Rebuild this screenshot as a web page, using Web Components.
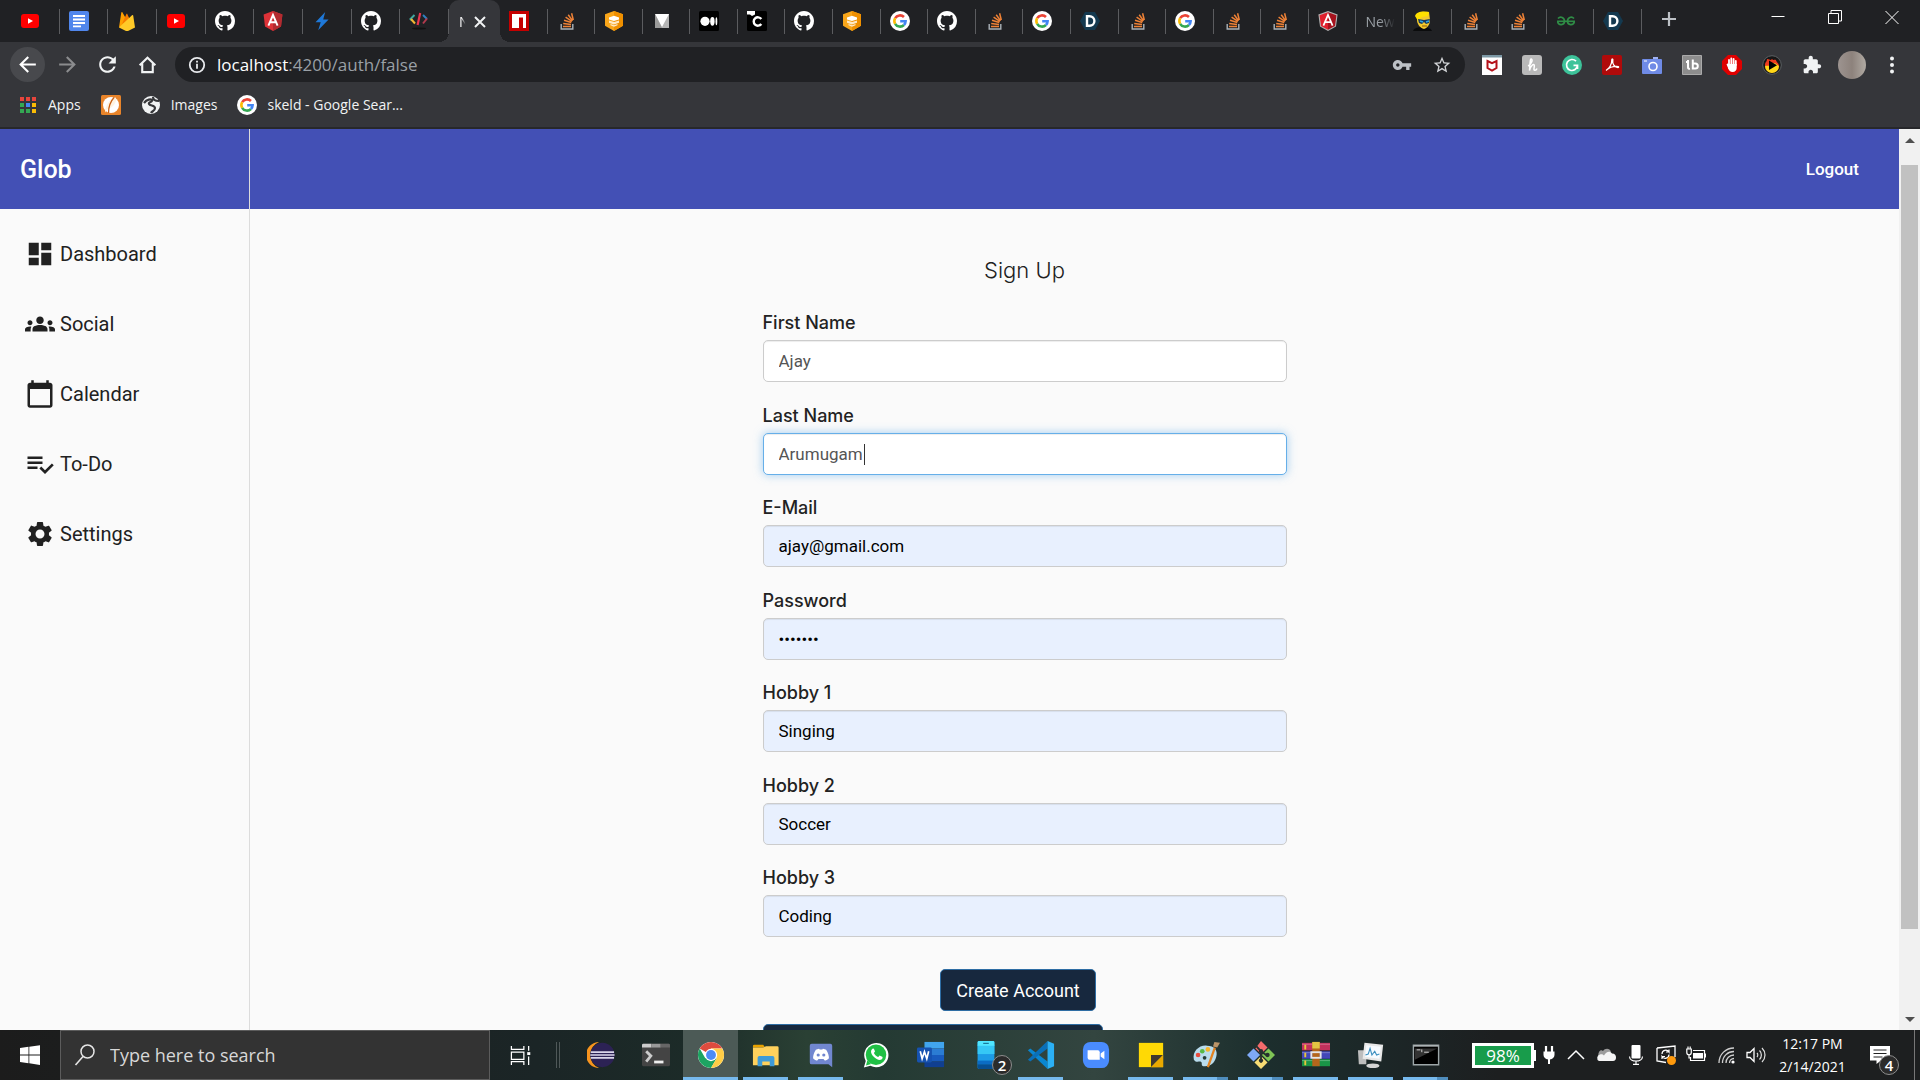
<!DOCTYPE html>
<html lang="en">
<head>
<meta charset="utf-8">
<title>NgGlob</title>
<style>
    body{
        --ui-font: "Open Sans", "Noto Sans", sans-serif;
        --app-font: Roboto, "Liberation Sans", sans-serif;
        --label-font: Inter, "Open Sans", sans-serif;
        --main-color: #4350b5;
        --navy: #17283e;
        display: flex;
        flex-direction: column;
        height: 100vh;
        margin: 0;
        overflow: hidden;
        font-family: var(--ui-font);
    }
    glob-app{
        flex: 1;
        min-height: 0;
    }
</style>
</head>
<body>
    <browser-tabs></browser-tabs>
    <browser-toolbar></browser-toolbar>
    <browser-bookmarks></browser-bookmarks>
    <glob-app>
        <glob-field label="First Name" value="Ajay"></glob-field>
        <glob-field label="Last Name" value="Arumugam" active></glob-field>
        <glob-field label="E-Mail" type="email" value="ajay@gmail.com" filled></glob-field>
        <glob-field label="Password" type="password" value="glob123" filled></glob-field>
        <glob-field label="Hobby 1" value="Singing" filled></glob-field>
        <glob-field label="Hobby 2" value="Soccer" filled></glob-field>
        <glob-field label="Hobby 3" value="Coding" filled></glob-field>
    </glob-app>
    <task-bar></task-bar>

<script>
const reset = `
    :host,
    *{
        box-sizing: border-box;
    }
    *{
        margin: 0;
        padding: 0;
    }
    button{
        border: 0;
        background: none;
        color: inherit;
        font: inherit;
    }
    a{
        color: inherit;
        text-decoration: none;
    }
`

// [viewBox size, markup]
const icons = {
    youtube: [20, '<rect x="1" y="3" width="18" height="14" rx="3" fill="#f00"/><path d="M8 7.2v5.6l5-2.8z" fill="#fff"/>'],
    docs: [20, '<rect width="20" height="20" rx="2" fill="#5086ec"/><path d="M4 5h12M4 8.5h12M4 12h12M4 15.3h8" stroke="#fff" stroke-width="1.8"/>'],
    firebase: [20, '<path d="M2 16.5 4.3 1.6c.1-.7.9-.8 1.2-.2L12 13z" fill="#ffa000"/><path d="M5 13 9.3 3.2c.2-.5.9-.5 1.1 0L13 9z" fill="#f57c00"/><path d="M2 16.5 15 4.2c.4-.4 1.1-.2 1.2.4L18 16.5 11 20a2 2 0 0 1-2 0z" fill="#ffca28"/>'],
    github: [16, '<path fill="#fff" d="M8 0C3.58 0 0 3.58 0 8c0 3.54 2.29 6.53 5.47 7.59.4.07.55-.17.55-.38 0-.19-.01-.82-.01-1.49-2.01.37-2.53-.49-2.69-.94-.09-.23-.48-.94-.82-1.13-.28-.15-.68-.52-.01-.53.63-.01 1.08.58 1.23.82.72 1.21 1.87.87 2.33.66.07-.52.28-.87.51-1.07-1.78-.2-3.64-.89-3.64-3.95 0-.87.31-1.59.82-2.15-.08-.2-.36-1.02.08-2.12 0 0 .67-.21 2.2.82.64-.18 1.32-.27 2-.27s1.36.09 2 .27c1.53-1.04 2.2-.82 2.2-.82.44 1.1.16 1.92.08 2.12.51.56.82 1.27.82 2.15 0 3.07-1.87 3.75-3.65 3.95.29.25.54.73.54 1.48 0 1.07-.01 1.93-.01 2.2 0 .21.15.46.55.38A8.01 8.01 0 0 0 16 8c0-4.42-3.58-8-8-8z"/>'],
    angular: [20, '<path d="M10 0 .6 3.4 2 15.6 10 20l8-4.4 1.4-12.2z" fill="#dd3238"/><path d="M10 0v20l8-4.4 1.4-12.2z" fill="#b32b30"/><path d="M5.4 14.6 10 4l4.6 10.6M7.2 11.2h5.6" fill="none" stroke="#fff" stroke-width="1.9"/>'],
    angularOld: [20, '<path d="M10 0 .4 3.4 2 15.6 10 20l8-4.4 1.6-12.2z" fill="#b3b3b3"/><path d="M10 1.2 1.6 4.2 3 15l7 3.8z" fill="#e0202d"/><path d="M10 1.2v17.6l7-3.8 1.4-10.8z" fill="#a6121d"/><path d="M5.4 14.6 10 4l4.6 10.6M7.2 11.2h5.6" fill="none" stroke="#fff" stroke-width="1.7"/>'],
    bolt: [20, '<path d="M13.2 1 3.5 11.3h5.2L6.2 19.2 16.6 8.6h-5.4z" fill="#1e78d8"/>'],
    code: [20, '<path d="M5.5 4 1.5 8l1.5 1.5" fill="none" stroke="#3fa9a0" stroke-width="2"/><path d="m2 8 4 4.5" stroke="#f2b632" stroke-width="2"/><path d="m11.2 2-2.6 12" stroke="#e8364f" stroke-width="2.2"/><path d="m14 4 4 4" stroke="#2f7fc1" stroke-width="2"/><path d="m18 7.5-4 5" stroke="#b33a4e" stroke-width="2"/><ellipse cx="10" cy="17.5" rx="7" ry="1" fill="#111"/>'],
    npm: [20, '<path d="M0 0h20v20H0z" fill="#c40000"/><path d="M3 3h14v14h-3V6.5h-4V17H3z" fill="#fff"/>'],
    stack: [20, '<path d="M4.2 13v5h11.6v-5" fill="none" stroke="#aab2b8" stroke-width="1.4"/><g stroke="#ef8236" stroke-width="1.5"><path d="M6 15.4h8M6.2 12.5l7.8.9M7 9.3l7.3 2.2M8.6 6.2l6.3 4.1M11.2 3.8l4.4 5.9M14.6 2.2l1.7 6.8"/></g>'],
    aws: [20, '<path d="m10 0 9 3.3v11.4L10 20l-9-5.3V3.3z" fill="#f9a61a"/><path d="m10 0 9 3.3v11.4L10 20z" fill="#f09000"/><path d="m5 6.5 5-1.8 5 1.8v2l-5 1.6-5-1.6z" fill="#fff"/><path d="m5 9.5 5 1.6 5-1.6v2.2l-5 1.7-5-1.7zM6.5 13l3.5 1.2 3.5-1.2v1.3L10 15.8l-3.5-1.5z" fill="#ffe9c4"/>'],
    vee: [20, '<path d="M3 3h14v14H3z" fill="#b5b5b5"/><path d="M3 3h14l-7 13z" fill="#fff"/><path d="M3 3v14h7z" fill="#9a9a9a"/>'],
    medium: [20, '<rect width="20" height="20" rx="1.5" fill="#000"/><g fill="#fff"><circle cx="6" cy="10.3" r="4.6"/><ellipse cx="13.4" cy="10.3" rx="2.2" ry="4.4"/><ellipse cx="17.4" cy="10.3" rx=".9" ry="4"/></g>'],
    codecademy: [20, '<rect width="20" height="20" rx="1.5" fill="#000"/><path d="M0 0h8v3.4L5 5 3 3.6H0z" fill="#fff"/><path d="M14.3 8a4.2 4.2 0 1 0 0 5" fill="none" stroke="#fff" stroke-width="2.4"/>'],
    google: [20, '<circle cx="10" cy="10" r="10" fill="#fff"/><g fill="none" stroke-width="2.6"><path d="M13.96 6.04A5.6 5.6 0 0 0 5.15 7.2" stroke="#ea4335"/><path d="M5.15 7.2a5.6 5.6 0 0 0 0 5.6" stroke="#fbbc05"/><path d="M5.15 12.8a5.6 5.6 0 0 0 8.81 1.16" stroke="#34a853"/><path d="M13.96 13.96A5.6 5.6 0 0 0 15.6 10.2H10.2" stroke="#4285f4"/></g>'],
    hexD: [20, '<path d="M5 1h10l5 9-5 9H5l-5-9z" fill="#14394f"/><path d="M7 5.2h2.6a4.8 4.8 0 0 1 0 9.6H7z" fill="none" stroke="#fff" stroke-width="2.4"/>'],
    face: [20, '<path d="M0 20c1-3 5-4 9-4s9 1 10 4z" fill="#0b0c0d"/><path d="M4 6c0-4 4-6 12-5l1 8c0 5-3 8-6 9-4-1-7-5-7-9z" fill="#f3c92c"/><path d="M2 5c2-5 8-5 14-4l-1 4-6 1-4 4z" fill="#ffe000"/><path d="m5 8 6 1 6-1-1 4-3 1-2-2-2 2-3-1z" fill="#173a5e"/><path d="m7 10 3 1m3 0 3-1" stroke="#2fa4e8" stroke-width="1.5"/><path d="M9 15h5" stroke="#8a5b13"/>'],
    gfg: [20, '<path d="M1 10.3h18" stroke="#2f8d46" stroke-width="1.6"/><path d="M2 7.5c2.5-2.7 6.5-1 6.5 2.8 0 4-6 4.5-6.8.5M18 7.5c-2.5-2.7-6.5-1-6.5 2.8 0 4 6 4.5 6.8.5" fill="none" stroke="#2f8d46" stroke-width="1.7"/>'],
    plus: [20, '<path d="M10 3v14M3 10h14" stroke="#bdc1c6" stroke-width="2.2"/>'],
    close: [20, '<path d="m5 6 10 10M15 6 5 16" stroke="#f1f3f4" stroke-width="2"/>'],
    minimize: [20, '<path d="M3.5 9.5h13" stroke="#fff"/>'],
    restore: [20, '<path d="M3.5 6.5h10v10h-10zM6 6V3.5h10.5V14H14" fill="none" stroke="#fff"/>'],
    exit: [20, '<path d="m3.5 4 13 13m0-13-13 13" stroke="#fff"/>'],
    back: [24, '<path fill="#fff" d="M20 11H7.83l5.59-5.59L12 4l-8 8 8 8 1.41-1.41L7.83 13H20v-2z"/>'],
    forward: [24, '<path fill="#8b8c8e" d="M12 4l-1.41 1.41L16.17 11H4v2h12.17l-5.58 5.59L12 20l8-8z"/>'],
    reload: [24, '<path fill="#f1f3f4" d="M17.65 6.35C16.2 4.9 14.21 4 12 4c-4.42 0-7.99 3.58-7.99 8s3.57 8 7.99 8c3.73 0 6.84-2.55 7.73-6h-2.08c-.82 2.33-3.04 4-5.65 4-3.31 0-6-2.69-6-6s2.69-6 6-6c1.66 0 3.14.69 4.22 1.78L13 11h7V4l-2.35 2.35z"/>'],
    home: [24, '<path d="M6.5 11v9h11v-9M3.8 12.8 12 5l8.2 7.8" fill="none" stroke="#f1f3f4" stroke-width="2.2"/>'],
    info: [20, '<circle cx="10" cy="10" r="7.2" fill="none" stroke="#e8eaed" stroke-width="1.8"/><path d="M10 8.8v5M10 5.8v1.8" stroke="#e8eaed" stroke-width="1.8"/>'],
    key: [24, '<path fill="#bdc1c6" d="M12.65 10C11.83 7.67 9.61 6 7 6c-3.31 0-6 2.69-6 6s2.69 6 6 6c2.61 0 4.83-1.67 5.65-4H17v4h4v-4h2v-4H12.65zM7 14c-1.1 0-2-.9-2-2s.9-2 2-2 2 .9 2 2-.9 2-2 2z"/>'],
    star: [24, '<path fill="#d0d2d5" d="M22 9.24l-7.19-.62L12 2 9.19 8.63 2 9.24l5.46 4.73L5.82 21 12 17.27 18.18 21l-1.63-7.03L22 9.24zM12 15.4l-3.76 2.27 1-4.28-3.32-2.88 4.38-.38L12 6.1l1.71 4.04 4.38.38-3.32 2.88 1 4.28L12 15.4z"/>'],
    mcafee: [20, '<path d="M0 0h20v20H0z" fill="#fff"/><path d="M0 0h20v2.5H0z" fill="#7c98a5"/><path d="m5.5 6 4.5 2.2L14.5 6v7L10 15.5 5.5 13z" fill="none" stroke="#b5121b" stroke-width="2"/>'],
    honey: [20, '<rect width="20" height="20" rx="3" fill="#b9b9b9"/><path d="M6 11c3-1 5-6 3.5-7S8 9 7.5 15.5C9 10 12 8 12.3 10.5c.2 2-1.3 5 .7 4.8 1 0 1.7-1 2-1.8" fill="none" stroke="#fff" stroke-width="1.5"/>'],
    grammarly: [20, '<circle cx="10" cy="10" r="10" fill="#3dc39a"/><path d="M14 6.2a5.5 5.5 0 1 0 1.5 4.2h-4M15.5 14v-3.5" fill="none" stroke="#fff" stroke-width="1.7"/>'],
    acrobat: [20, '<rect width="20" height="20" rx="2" fill="#b00a0a"/><path d="M4 15.5c3-1.5 6-6 5.8-10.5 0-1.5 1.4-1.2 1 .3C10 9 13 12.5 16 12.5c1 0 .8-1-.5-1C11.5 11.3 7 12.8 4.5 15" fill="none" stroke="#fff" stroke-width="1.3"/>'],
    camera: [20, '<path d="M11 2h5v2h-5z" fill="#9fb1f3"/><rect y="4" width="20" height="15" rx="1" fill="#6f8be6"/><path d="M2 6h3" stroke="#fff"/><circle cx="11" cy="11.5" r="4" fill="none" stroke="#fff" stroke-width="1.6"/>'],
    tb: [20, '<path d="M.5.5h19v19H.5z" fill="#8d8d8d" stroke="#aaa"/><path d="M4 7h3m-1-2v7.5c0 1 1 1.5 2 1.3M10.8 4.5v9h2.5a2.3 2.3 0 0 0 0-5h-2" fill="none" stroke="#fff" stroke-width="2"/>'],
    hand: [20, '<path d="M6 0h8l6 6v8l-6 6H6l-6-6V6z" fill="#e00000"/><g stroke="#fff" stroke-width="1.8" stroke-linecap="round"><path d="M7 10V5M9.3 9V3.5M11.6 9V4M13.8 10V6M5.5 9.5 7 13"/></g><path d="M6 9h8.7v4c0 2-1.5 4-4.2 4-2.2 0-3.5-1.5-4.5-4z" fill="#fff"/>'],
    flame: [20, '<circle cx="10" cy="10" r="9.3" fill="#171717" stroke="#5b6063"/><path d="M3 10c0-3 2-3 2-6 3 0 3 2 5 0 2 2 2 0 4 1 0 2 3 3 3 6a7 7 0 0 1-14-1z" fill="#ee3b1f"/><path d="M3 11c2-1 4 1 7-2s5 1 7 2a7 7 0 0 1-14 0z" fill="#ffd818"/><path d="m7 5.5 8 4.8-8 4.7z" fill="#000"/>'],
    puzzle: [24, '<path fill="#f1f3f4" d="M20.5 11H19V7c0-1.1-.9-2-2-2h-4V3.5C13 2.12 11.88 1 10.5 1S8 2.12 8 3.5V5H4c-1.1 0-1.99.9-1.99 2v3.8H3.5c1.49 0 2.7 1.21 2.7 2.7s-1.21 2.7-2.7 2.7H2V20c0 1.1.9 2 2 2h3.8v-1.5c0-1.49 1.21-2.7 2.7-2.7 1.49 0 2.7 1.21 2.7 2.7V22H17c1.1 0 2-.9 2-2v-4h1.5c1.38 0 2.5-1.12 2.5-2.5S21.88 11 20.5 11z"/>'],
    avatar: [28, '<defs><linearGradient id="a"><stop stop-color="#9d9490"/><stop offset=".5" stop-color="#8d827c"/><stop offset="1" stop-color="#b0aaa3"/></linearGradient></defs><circle cx="14" cy="14" r="14" fill="url(#a)"/>'],
    dots: [20, '<g fill="#f1f3f4"><circle cx="10" cy="3.5" r="2"/><circle cx="10" cy="10" r="2"/><circle cx="10" cy="16.5" r="2"/></g>'],
    apps: [20, '<g fill="#e8453c"><path d="M2 2h4v4H2zM8 2h4v4H8zM14 2h4v4h-4z"/></g><path d="M2 8h4v4H2zM2 14h4v4H2zM8 14h4v4H8z" fill="#34a853"/><path d="M8 8h4v4H8z" fill="#4285f4"/><path d="M14 8h4v4h-4zM14 14h4v4h-4z" fill="#fbbc05"/>'],
    feather: [20, '<rect width="20" height="20" rx="1.5" fill="#e8842a"/><circle cx="10" cy="10" r="8" fill="#fff"/><path d="M4 15C6 8 10 3 15 2.5c1 5-3 10-9 12l-2 3z" fill="#fff3e0"/><path d="M13 2.5C9 7 7.5 12 7.5 18" fill="none" stroke="#c95f14" stroke-width="1.3"/>'],
    globe: [20, '<circle cx="10" cy="10" r="9" fill="#f1f3f4"/><path d="M3 8c3-4 7-4 8-3 1 2-4 2-3 4s6 1 6 4-3 3-4 5M12 2c0 3 3 4 6 4" fill="none" stroke="#36373a" stroke-width="2.2"/>'],
    dashboard: [24, '<path d="M3 13h8V3H3v10zm0 8h8v-6H3v6zm10 0h8V11h-8v10zm0-18v6h8V3h-8z"/>'],
    groups: [24, '<path d="M12 12.75c1.63 0 3.07.39 4.24.9 1.08.48 1.76 1.56 1.76 2.73V18H6v-1.61c0-1.18.68-2.26 1.76-2.73 1.17-.52 2.61-.91 4.24-.91zM4 13c1.1 0 2-.9 2-2s-.9-2-2-2-2 .9-2 2 .9 2 2 2zm1.13 1.1c-.37-.06-.74-.1-1.13-.1-.99 0-1.93.21-2.78.58C.48 14.9 0 15.62 0 16.43V18h4.5v-1.61c0-.83.23-1.61.63-2.29zM20 13c1.1 0 2-.9 2-2s-.9-2-2-2-2 .9-2 2 .9 2 2 2zm4 3.43c0-.81-.48-1.53-1.22-1.85-.85-.37-1.79-.58-2.78-.58-.39 0-.76.04-1.13.1.4.68.63 1.46.63 2.29V18H24v-1.57zM12 6c1.66 0 3 1.34 3 3s-1.34 3-3 3-3-1.34-3-3 1.34-3 3-3z"/>'],
    calendar: [24, '<path d="M20 3h-1V1h-2v2H7V1H5v2H4c-1.1 0-2 .9-2 2v16c0 1.1.9 2 2 2h16c1.1 0 2-.9 2-2V5c0-1.1-.9-2-2-2zm0 18H4V8h16v13z"/>'],
    todo: [24, '<path d="M14 10H2v2h12v-2zm0-4H2v2h12V6zM2 16h8v-2H2v2zm19.5-4.5L23 13l-6.99 7-4.51-4.5L13 14l3.01 3 5.49-5.5z"/>'],
    settings: [24, '<path d="M19.14 12.94c.04-.3.06-.61.06-.94 0-.32-.02-.64-.07-.94l2.03-1.58c.18-.14.23-.41.12-.61l-1.92-3.32c-.12-.22-.37-.29-.59-.22l-2.39.96c-.5-.38-1.03-.7-1.62-.94l-.36-2.54c-.04-.24-.24-.41-.48-.41h-3.84c-.24 0-.43.17-.47.41l-.36 2.54c-.59.24-1.13.57-1.62.94l-2.39-.96c-.22-.08-.47 0-.59.22L2.74 8.87c-.12.21-.08.47.12.61l2.03 1.58c-.05.3-.09.63-.09.94s.02.64.07.94l-2.03 1.58c-.18.14-.23.41-.12.61l1.92 3.32c.12.22.37.29.59.22l2.39-.96c.5.38 1.03.7 1.62.94l.36 2.54c.05.24.24.41.48.41h3.84c.24 0 .44-.17.47-.41l.36-2.54c.59-.24 1.13-.56 1.62-.94l2.39.96c.22.08.47 0 .59-.22l1.92-3.32c.12-.22.07-.47-.12-.61l-2.01-1.58zM12 15.6c-1.98 0-3.6-1.62-3.6-3.6s1.62-3.6 3.6-3.6 3.6 1.62 3.6 3.6-1.62 3.6-3.6 3.6z"/>'],
    windows: [20, '<path d="M0 3 8.5 1.8v7.7H0zM9.3 1.7 20 .2v9.3H9.3zM0 10.4h8.5v7.8L0 17zM9.3 10.4H20v9.5L9.3 18.3z" fill="#fff"/>'],
    search: [24, '<circle cx="14.5" cy="8.5" r="6.5" fill="none" stroke="#e6e6e6" stroke-width="1.5"/><path d="M10 13.5 2.5 22" stroke="#e6e6e6" stroke-width="1.6"/>'],
    taskview: [24, '<path d="M2.5 2v3.5h13V2M2.5 22v-3.5h13V22M2.5 8.5h13V16h-13zM20.5 2v5M20.5 13v9" fill="none" stroke="#fff" stroke-width="1.3"/><path d="M19 8.5h3.2v3H19z" fill="#fff"/>'],
    eclipse: [30, '<path d="M13 1a14 14 0 0 0 0 28 15 15 0 0 1 0-28z" fill="#f7941e"/><circle cx="16.5" cy="15" r="13" fill="#2c2255"/><path d="M4 12h25M3.5 15h26M4 18h25" stroke="#d9d5ea" stroke-width="1.8"/>'],
    terminal: [30, '<rect y="3" width="30" height="24" rx="1.5" fill="#444"/><path d="M0 4.5A1.5 1.5 0 0 1 1.5 3H10v4H0z" fill="#ccc"/><path d="M10 3h10v4H10z" fill="#999"/><path d="M20 3h8.5A1.5 1.5 0 0 1 30 4.5V7H20z" fill="#666"/><path d="m4.500 11 5 5-5 6" fill="none" stroke="#ccc" stroke-width="3"/><path d="M13 22.5h10" stroke="#eee" stroke-width="3"/>'],
    chrome: [30, '<circle cx="15" cy="15" r="14" fill="#fff"/><path d="M15 15 2.9 8A14 14 0 0 1 27.1 8H15z" fill="#dd4b3e"/><path d="M2.9 8A14 14 0 0 0 15 29l6.1-10.5-12.2 0z" fill="#1da462"/><path d="M27.1 8A14 14 0 0 1 15 29l6.1-10.500L15 8z" fill="#ffcd46"/><circle cx="15" cy="15" r="6.6" fill="#fff"/><circle cx="15" cy="15" r="5.3" fill="#4c8bf5"/>'],
    folder: [30, '<path d="M1 5.5A1.500 1.500 0 0 1 2.500 4H12l2 3H1z" fill="#e8a200"/><path d="M1 7h11l3-1.500h12A1.500 1.500 0 0 1 28.500 7v19H1z" fill="#ffd15c"/><path d="M6 27v-9a2 2 0 0 1 2-2h14a2 2 0 0 1 2 2v9h-5v-5h-8v5z" fill="#3f9bd8"/>'],
    discord: [30, '<path d="M5 3h20a2 2 0 0 1 2 2v23l-4-3H5a2 2 0 0 1-2-2V5a2 2 0 0 1 2-2z" fill="#7187d0"/><path d="M9.5 9.5c2-1.3 3.5-1.3 3.500-1.300l.6 1h2.800l.6-1s1.500 0 3.500 1.300c2.200 3.500 3 6.500 3 9-2 2.300-4.500 2.500-4.500 2.500l-1.300-1.800h-5.400L11 21s-2.500-.2-4.500-2.500c0-2.500.8-5.500 3-9z" fill="#fff"/><circle cx="12" cy="15" r="1.7" fill="#7187d0"/><circle cx="18" cy="15" r="1.7" fill="#7187d0"/>'],
    whatsapp: [30, '<path d="M2 28.500 4 21.500A13 13 0 1 1 9 26.500z" fill="#fff"/><circle cx="15" cy="14.800" r="11" fill="#20c045"/><path d="m4.300 26.200 1.500-5.500 4 4z" fill="#20c045"/><path d="M10.500 9c1-1.500 2.300-1 2.600 0l.8 2c.2.8-1.400 1.500-1 2.200 1 1.800 2.300 3 4.200 3.900.8.300 1.300-1.800 2.200-1.400l2.400 1.200c.8.500.3 2.400-1 3-4 2-11.700-5-11-9 .1-.7.3-1.300.8-1.900z" fill="#fff"/>'],
    word: [30, '<path d="M8 1h21v7H8z" fill="#41a5ee"/><path d="M8 8h21v7H8z" fill="#2b7cd3"/><path d="M8 15h21v7H8z" fill="#185abd"/><path d="M8 22h21v6H8z" fill="#103f91"/><rect y="7" width="16" height="16" rx="1.5" fill="#1652b0"/><path d="m3.500 11 2 8L8 11.500l2.500 7.500 2-8" fill="none" stroke="#fff" stroke-width="1.800"/>'],
    phone: [30, '<rect x="6" width="18" height="30" rx="1.5" fill="#1c9be6"/><path d="M6 4h18v10H6z" fill="#35c7f5"/><path d="M6 21h18v4H6z" fill="#0b6cc4"/><path d="M6 25h18v3.500A1.500 1.500 0 0 1 22.500 30h-15A1.500 1.500 0 0 1 6 28.500z" fill="#074f92"/><path d="M6 1.500A1.500 1.500 0 0 1 7.500 0h15A1.500 1.500 0 0 1 24 1.500V5H6z" fill="#50e6ff"/><path d="M12 2.500h6" stroke="#0a5a80"/>'],
    vscode: [30, '<path d="m1 10 2.500-2L22 22v8z" fill="#0a86d1"/><path d="M1 20 22 0v8L3.500 22z" fill="#0a6fb8"/><path d="m22 0 7 3v24l-7 3z" fill="#2bb0f5"/>'],
    zoom: [30, '<rect x="1" y="1" width="28" height="28" rx="8" fill="#4a8cff"/><path d="M6 10h11a2 2 0 0 1 2 2v8H8a2 2 0 0 1-2-2z" fill="#fff"/><path d="m20 13.500 4-3v9l-4-3z" fill="#fff"/>'],
    sticky: [30, '<path d="M2 2h26v26H2z" fill="#ffd905"/><path d="M15 15h13L15 28z" fill="#3f3a2e"/><path d="M28 15v13H15z" fill="#eaa900"/>'],
    paint: [30, '<path d="M2 20C0 11 8 4 16 5c8 0 12 5 10 12-2 8-8 11-14 10-3-1 0-4-3-5-3 0-5 1-7-2z" fill="#b9dced"/><circle cx="6.5" cy="15" r="2.5" fill="#e84b3c"/><circle cx="11" cy="11" r="2.5" fill="#58b947"/><circle cx="17" cy="9" r="2.5" fill="#f7b52c"/><circle cx="13.5" cy="18" r="2" fill="#253b38"/><path d="M24.500 7 17 28" stroke="#e38220" stroke-width="2.400"/><path d="m22.500 6 1.500-5 6 1-3 5z" fill="#bb9468"/>'],
    git: [30, '<path d="m15 0 7 7-7 7-6-6z" fill="#f36b6b"/><path d="m23 8 7 7-7 7-7-7z" fill="#7fc455"/><path d="m7 8 7 7-7 7-7-7z" fill="#7fa9f7"/><path d="m15 16 7 7-7 7-7-7z" fill="#f7dc74"/><path d="M9 4.500 15 11v12M15 11l7 5" fill="none" stroke="#26302f" stroke-width="2"/><g fill="#26302f"><circle cx="15" cy="11" r="2.3"/><circle cx="15" cy="21" r="2.3"/><circle cx="22" cy="15" r="2.3"/></g>'],
    winrar: [30, '<path d="M0 2h30v8H0z" fill="#c2305c"/><path d="M0 11h30v8H0z" fill="#4247b8"/><path d="M0 19.500h30V27H0z" fill="#199447"/><path d="M0 3.500h30M0 12.500h30M0 21h30" stroke="#fff" stroke-opacity=".3"/><path d="M11 1h8v26h-8z" fill="#b4661c"/><path d="M11 1h8v7h-8z" fill="#e3c343"/><rect x="10" y="12" width="10" height="6" fill="none" stroke="#e6e6e6" stroke-width="2"/><path d="M3.500 4v5M3.500 12.500v5M3.500 21v5" stroke="#e8c53b" stroke-width="2"/>'],
    monitor: [30, '<path d="M1 10h9v15H2z" fill="#bdbdbd"/><ellipse cx="17" cy="26.500" rx="7" ry="2.500" fill="#d5d5d5"/><path d="m8 2 20 2-2 18L6 19z" fill="#e8e8e8"/><path d="m10 4.500 15.500 1.700L24 19 8.500 17z" fill="#f7fbff"/><path d="m9 15 3-1 2-6 2 7 3-4 2 4 3-1" fill="none" stroke="#3b8fc0" stroke-width="1.200"/>'],
    cmd: [30, '<path d="M1.500 4.500h27v21h-27z" fill="#000" stroke="#9da6a8" stroke-width="1.500"/><path d="M2 5.500h26" stroke="#c6cccd"/><path d="M3 8h24L3 20z" fill="#333"/><path d="M5 9.500h4M10.500 9v3M13 12h5" stroke="#ddd"/>'],
    plug: [20, '<path d="M7 1v6M13 1v6" stroke="#fff" stroke-width="2.200"/><path d="M4.500 6.500h11V10a5.500 4.500 0 0 1-11 0z" fill="#fff"/><path d="M10 13v6" stroke="#fff" stroke-width="2"/>'],
    up: [20, '<path d="m2 14 8-8 8 8" fill="none" stroke="#fff" stroke-width="1.500"/>'],
    cloud: [20, '<path d="M4 13a5 5 0 0 1-1-6c1-2 3-2 4-1 2-3 7-3 8 1l-6 6z" fill="#9c9c9c"/><path d="M3 16a3.500 3.500 0 0 1 1-6.500c2-.5 3 .3 4 1 2-4 6-5 8-2 3 0 4 2 4 4s-1 3.500-3 3.500z" fill="#f5f5f5"/>'],
    mic: [20, '<rect x="5.500" width="9" height="13.500" rx="1" fill="#fff"/><path d="M3.500 11.500c0 6 13 6 13 0M10 16v3.300M7 19.300h6" fill="none" stroke="#fff" stroke-width="1.200"/>'],
    update: [20, '<path d="M1 3 19 1v11M1 3v13l9 1.500" fill="none" stroke="#fff" stroke-width="1.300"/><path d="M6 9c0-4 5-5 7-2V4.500M13 7h-3M13 9.500c0 4-5 5-7 2V14M6 11.500h3" fill="none" stroke="#fff" stroke-width="1.200"/><circle cx="15.500" cy="15.500" r="4.500" fill="#ff9a0d"/>'],
    power: [20, '<path d="M7 5.500h11.500v10h-14V12" fill="none" stroke="#fff" stroke-width="1.200"/><path d="M7 8h10v5.500H7zM19 8.500h1v4h-1z" fill="#fff"/><path d="M.8 4v3.500c0 3 4.500 3 4.500 0V4zM2 1.500V4M4.200 1.500V4M3 10v3h1.500" fill="none" stroke="#fff" stroke-width="1.200"/>'],
    wifi: [20, '<g fill="none" stroke="#d0d0d0" stroke-width="1.300"><path d="M3 18C3 9 10 3 18 3M6.500 18C6.500 11 12 6.500 18 6.500M10 18c0-4.500 3.500-8 8-8M13.500 18c0-2.500 2-4.500 4.500-4.500"/></g><circle cx="17" cy="17" r="1.600" fill="#fff"/>'],
    volume: [20, '<path d="M1 7.500h3l4-4v13l-4-4H1z" fill="none" stroke="#fff" stroke-width="1.300"/><path d="M11 8c1 1 1 3 0 4M13.500 5.500c2.500 2.500 2.500 6.500 0 9M16 3c4 4 4 10 0 14" fill="none" stroke="#e0e0e0" stroke-width="1.200"/>'],
    note: [20, '<path d="M0 1h20v14.500h-9L6.500 19v-3.500H0z" fill="#fff"/><path d="M3.500 5h13M3.500 8.500h13M3.500 12h9" stroke="#222" stroke-width="1.200"/>']
}

class GlobIcon extends HTMLElement{
    constructor(){
        super()
        this.attachShadow({mode: 'open'})
    }
    connectedCallback(){
        const [box, markup] = icons[this.getAttribute('name')]
        const size = this.getAttribute('size') || 20
        this.shadowRoot.innerHTML = `
            <style>
                :host{
                    display: inline-flex;
                    flex: none;
                }
                svg{
                    display: block;
                }
            </style>
            <svg width="${size}" height="${size}" viewBox="0 0 ${box} ${box}" fill="currentColor" aria-hidden="true">${markup}</svg>
        `
    }
}

class BrowserTabs extends HTMLElement{
    constructor(){
        super()
        this.attachShadow({mode: 'open'})
        const left = ['youtube', 'docs', 'firebase', 'youtube', 'github', 'angular', 'bolt', 'github', 'code']
        const right = ['npm', 'stack', 'aws', 'vee', 'medium', 'codecademy', 'github', 'aws', 'google', 'github', 'stack', 'google',
            'hexD', 'stack', 'google', 'stack', 'stack', 'angularOld', 'New', 'face', 'stack', 'stack', 'gfg', 'hexD']
        this.shadowRoot.innerHTML = `
            <style>
                ${reset}
                :host{
                    display: grid;
                    grid-template-columns: 438px 51px minmax(0, 1142px) 1fr auto;
                    height: 42px;
                    padding-left: 11px;
                    background: #202124;
                    color: #9aa0a6;
                    font-size: 14px;
                }
                .group{
                    display: flex;
                    align-items: center;
                }
                .tab{
                    display: flex;
                    flex: 1 1 0;
                    align-items: center;
                    min-width: 0;
                    height: 25px;
                    padding-left: 9px;
                    border-right: 1px solid #5b5c5f;
                }
                .group:first-child .tab:last-child{
                    border-color: transparent;
                }
                .title{
                    -webkit-mask-image: linear-gradient(90deg, #000 50%, transparent);
                    mask-image: linear-gradient(90deg, #000 50%, transparent);
                }
                .active{
                    position: relative;
                    display: flex;
                    align-items: center;
                    padding-left: 10px;
                    border-radius: 10px 10px 0 0;
                    background: #35363a;
                    color: #fff;
                }
                .active::before,
                .active::after{
                    content: '';
                    position: absolute;
                    bottom: 0;
                    width: 10px;
                    height: 10px;
                }
                .active::before{
                    right: 100%;
                    background: radial-gradient(circle at 0 0, transparent 10px, #35363a 10px);
                }
                .active::after{
                    left: 100%;
                    background: radial-gradient(circle at 100% 0, transparent 10px, #35363a 10px);
                }
                .active span{
                    -webkit-mask-image: linear-gradient(90deg, #000 20%, transparent 60%);
                    mask-image: linear-gradient(90deg, #000 20%, transparent 60%);
                }
                .active button{
                    display: flex;
                }
                .new{
                    justify-self: start;
                    padding: 0 17px;
                }
                .controls{
                    display: flex;
                }
                .controls button{
                    width: 57px;
                    height: 38px;
                }
            </style>
            <div class="group">${left.map(this._tab).join('')}</div>
            <div class="active"><span>N</span><button aria-label="Close tab"><glob-icon name="close"></glob-icon></button></div>
            <div class="group">${right.map(this._tab).join('')}</div>
            <button class="new" aria-label="New tab"><glob-icon name="plus"></glob-icon></button>
            <div class="controls">
                <button aria-label="Minimize"><glob-icon name="minimize"></glob-icon></button>
                <button aria-label="Restore"><glob-icon name="restore"></glob-icon></button>
                <button aria-label="Close"><glob-icon name="exit"></glob-icon></button>
            </div>
        `
    }
    _tab(name){
        return name === 'New'
            ? '<button class="tab"><span class="title">New</span></button>'
            : `<button class="tab" aria-label="${name}"><glob-icon name="${name}"></glob-icon></button>`
    }
}

class BrowserToolbar extends HTMLElement{
    constructor(){
        super()
        this.attachShadow({mode: 'open'})
        const extensions = ['mcafee', 'honey', 'grammarly', 'acrobat', 'camera', 'tb', 'hand', 'flame']
        this.shadowRoot.innerHTML = `
            <style>
                ${reset}
                :host{
                    display: flex;
                    align-items: center;
                    height: 45px;
                    padding: 0 8px 0 10px;
                    background: #35363a;
                }
                .nav{
                    display: flex;
                    gap: 5px;
                    margin-right: 10px;
                }
                button{
                    display: flex;
                    align-items: center;
                    justify-content: center;
                    width: 35px;
                    height: 35px;
                    border-radius: 50%;
                }
                .nav button:first-child{
                    background: #48494d;
                }
                .address{
                    display: flex;
                    flex: 1;
                    align-items: center;
                    height: 35px;
                    margin-right: 7px;
                    padding: 0 3px 0 12px;
                    border-radius: 18px;
                    background: #202124;
                }
                p{
                    flex: 1;
                    margin-left: 10px;
                    color: #9aa0a6;
                    font-size: 17px;
                    line-height: 24px;
                }
                p span{
                    color: #fff;
                }
                .address button,
                .extensions button{
                    width: 40px;
                }
                .extensions{
                    display: flex;
                }
            </style>
            <div class="nav">
                <button aria-label="Back"><glob-icon name="back" size="25"></glob-icon></button>
                <button aria-label="Forward"><glob-icon name="forward" size="25"></glob-icon></button>
                <button aria-label="Reload"><glob-icon name="reload" size="25"></glob-icon></button>
                <button aria-label="Home"><glob-icon name="home" size="23"></glob-icon></button>
            </div>
            <div class="address">
                <glob-icon name="info"></glob-icon>
                <p><span>localhost</span>:4200/auth/false</p>
                <button aria-label="Passwords"><glob-icon name="key"></glob-icon></button>
                <button aria-label="Bookmark"><glob-icon name="star"></glob-icon></button>
            </div>
            <div class="extensions">
                ${extensions.map(name => `<button aria-label="${name}"><glob-icon name="${name}"></glob-icon></button>`).join('')}
                <button aria-label="Extensions"><glob-icon name="puzzle"></glob-icon></button>
                <button aria-label="Profile"><glob-icon name="avatar" size="28"></glob-icon></button>
                <button aria-label="Menu"><glob-icon name="dots"></glob-icon></button>
            </div>
        `
    }
}

class BrowserBookmarks extends HTMLElement{
    constructor(){
        super()
        this.attachShadow({mode: 'open'})
        this.shadowRoot.innerHTML = `
            <style>
                ${reset}
                :host{
                    display: flex;
                    align-items: center;
                    gap: 20px;
                    height: 42px;
                    padding: 0 18px 5px;
                    border-bottom: 2px solid #27282b;
                    background: #35363a;
                    color: #f1f3f4;
                    font-size: 14px;
                    line-height: 20px;
                }
                a{
                    display: flex;
                    align-items: center;
                    gap: 10px;
                }
            </style>
            <a href="#"><glob-icon name="apps"></glob-icon>Apps</a>
            <a href="#" aria-label="Feather"><glob-icon name="feather"></glob-icon></a>
            <a href="#"><glob-icon name="globe"></glob-icon>Images</a>
            <a href="#"><glob-icon name="google"></glob-icon>skeld - Google Sear...</a>
        `
    }
}

class GlobField extends HTMLElement{
    constructor(){
        super()
        this.attachShadow({mode: 'open'})
        this.shadowRoot.innerHTML = `
            <style>
                ${reset}
                :host{
                    display: block;
                }
                label{
                    display: block;
                    margin-bottom: 4px;
                    color: #222;
                    font: 500 18px/27px var(--label-font);
                }
                .box{
                    position: relative;
                }
                input{
                    display: block;
                    width: 100%;
                    height: 42px;
                    padding: 0 15px;
                    border: 1px solid #ccc;
                    border-radius: 5px;
                    outline: 0;
                    background: #fff;
                    box-shadow: inset 0 1px 1px rgba(0,0,0,.075);
                    color: #555;
                    font: 17px/25px var(--app-font);
                }
                :host([filled]) input{
                    background: #e8f0fe;
                    color: #000;
                }
                :host([active]) input{
                    border-color: #66afe9;
                    box-shadow: inset 0 1px 1px rgba(0,0,0,.075), 0 0 10px rgba(102,175,233,.6);
                }
                .caret{
                    display: none;
                    position: absolute;
                    top: 11px;
                    width: 1px;
                    height: 21px;
                    background: #333;
                }
                :host([active]) .caret{
                    display: block;
                }
            </style>
            <label for="field"></label>
            <div class="box"><input id="field"><i class="caret"></i></div>
        `
        this._labelEl = this.shadowRoot.querySelector('label')
        this._inputEl = this.shadowRoot.querySelector('input')
        this._caretEl = this.shadowRoot.querySelector('.caret')
    }
    connectedCallback(){
        this._labelEl.textContent = this.getAttribute('label')
        this._inputEl.type  = this.getAttribute('type') || 'text'
        this._inputEl.value = this.getAttribute('value')
        if(this.hasAttribute('active')){
            this._placeCaret()
        }
    }
    _placeCaret(){
        const context = document.createElement('canvas').getContext('2d')
        context.font = '17px Roboto, "Liberation Sans", sans-serif'
        this._caretEl.style.left = 16 + Math.ceil(context.measureText(this._inputEl.value).width) + 'px'
    }
}

class GlobApp extends HTMLElement{
    constructor(){
        super()
        this.attachShadow({mode: 'open'})
        const links = [['dashboard', 'Dashboard'], ['groups', 'Social'], ['calendar', 'Calendar'], ['todo', 'To-Do'], ['settings', 'Settings']]
        this.shadowRoot.innerHTML = `
            <style>
                ${reset}
                :host{
                    display: grid;
                    grid-template-columns: 250px 1fr 21px;
                    overflow: hidden;
                    background: #fafafa;
                    color: #212121;
                    font-family: var(--app-font);
                }
                aside{
                    border-right: 1px solid #dcdcdc;
                }
                .brand,
                header{
                    display: flex;
                    align-items: center;
                    height: 80px;
                    background: var(--main-color);
                    color: #fff;
                    font-weight: 500;
                }
                .brand{
                    padding-left: 20px;
                    font-size: 25px;
                }
                header{
                    justify-content: flex-end;
                    padding-right: 40px;
                }
                header button{
                    font-size: 17px;
                }
                nav{
                    padding-top: 10px;
                }
                nav a{
                    display: flex;
                    align-items: center;
                    gap: 5px;
                    height: 70px;
                    padding-left: 25px;
                    font-size: 20px;
                }
                main{
                    min-width: 0;
                    overflow: hidden;
                }
                form{
                    width: 524px;
                    max-width: 100%;
                    margin: 0 auto;
                    padding-top: 46px;
                }
                .content{
                    padding-right: 100px;
                }
                h1{
                    margin-bottom: 24px;
                    font: 300 22px/30px var(--label-font);
                    text-align: center;
                }
                .fields{
                    display: grid;
                    grid-auto-rows: 1fr;
                    min-height: 648px;
                }
                .actions{
                    display: flex;
                    flex-direction: column;
                    align-items: flex-start;
                    gap: 13px;
                    padding-top: 12px;
                }
                .actions button{
                    height: 42px;
                    padding: 0 15px;
                    border: 1px solid #2e6da4;
                    border-radius: 5px;
                    background: var(--navy);
                    color: #fff;
                    font-size: 18px;
                }
                .center{
                    align-self: center;
                    margin-right: 13px;
                }
                .wide{
                    width: 65%;
                }
                .scroll{
                    display: flex;
                    flex-direction: column;
                    align-items: center;
                    padding: 9px 0 8px;
                    background: #f1f1f1;
                }
                .scroll i{
                    border: 5px solid transparent;
                }
                .scroll .up{
                    border-top: 0;
                    border-bottom-color: #505050;
                }
                .scroll .down{
                    border-bottom: 0;
                    border-top-color: #505050;
                }
                .thumb{
                    flex: 1;
                    width: 17px;
                    margin: 22px 0 88px;
                    background: #c1c1c1;
                }
            </style>
            <aside>
                <div class="brand">Glob</div>
                <nav>
                    ${links.map(([icon, text]) => `<a href="#"><glob-icon name="${icon}" size="30"></glob-icon>${text}</a>`).join('')}
                </nav>
            </aside>
            <main>
                <header><button>Logout</button></header>
                <div class="content">
                    <form>
                        <h1>Sign Up</h1>
                        <div class="fields"><slot></slot></div>
                        <div class="actions">
                            <button type="button" class="center">Create Account</button>
                            <button type="button" class="wide" aria-label="Back to login"></button>
                        </div>
                    </form>
                </div>
            </main>
            <div class="scroll"><i class="up"></i><div class="thumb"></div><i class="down"></i></div>
        `
    }
}

class TaskBar extends HTMLElement{
    constructor(){
        super()
        this.attachShadow({mode: 'open'})
        // [icon, state]: open = underline, many = underline with stacked windows
        const apps = [['eclipse'], ['terminal'], ['chrome', 'current'], ['folder', 'open'], ['discord', 'open'], ['whatsapp'], ['word'], ['phone'],
            ['vscode', 'open'], ['zoom'], ['sticky', 'open'], ['paint', 'open many'], ['git', 'open many'], ['winrar', 'open'], ['monitor', 'open'], ['cmd', 'open many']]
        const tray = ['up', 'cloud', 'mic', 'update', 'power', 'wifi', 'volume']
        this.shadowRoot.innerHTML = `
            <style>
                ${reset}
                :host{
                    display: flex;
                    height: 50px;
                    background: linear-gradient(90deg, #1c1c1c 0, #1b2526 28%, #1c2b28 36%, #2a4034 42%, #243a33 46%, #334540 57%, #1c2e2d 66%, #1c2425 74%, #1d1f20 78%);
                    color: #fff;
                    font-size: 15px;
                }
                button{
                    position: relative;
                    display: flex;
                    flex: none;
                    align-items: center;
                    justify-content: center;
                }
                .start,
                .view{
                    width: 60px;
                }
                .search{
                    display: flex;
                    align-items: center;
                    gap: 13px;
                    width: 430px;
                    padding-left: 12px;
                    border: 1px solid #5c5c5c;
                    background: #333;
                }
                input{
                    flex: 1;
                    min-width: 0;
                    border: 0;
                    outline: 0;
                    background: none;
                    font: 18px var(--ui-font);
                }
                input::placeholder{
                    color: #d8d8d8;
                    opacity: 1;
                }
                hr{
                    width: 4px;
                    height: 26px;
                    margin: 12px 13px 0 6px;
                    border: solid #4f5858;
                    border-width: 0 1px;
                }
                .app{
                    width: 55px;
                }
                .current{
                    background: #4c5a56;
                }
                .open::after,
                .current::after{
                    content: '';
                    position: absolute;
                    right: 5px;
                    bottom: 0;
                    left: 5px;
                    height: 3px;
                    background: #76b9ed;
                }
                .current::after{
                    right: 0;
                    left: 0;
                }
                .many::after{
                    background: linear-gradient(90deg, #76b9ed 34px, #4f8dbd 34px);
                }
                .badge{
                    position: absolute;
                    display: flex;
                    align-items: center;
                    justify-content: center;
                    width: 20px;
                    height: 20px;
                    border: 1px solid #8d8d8d;
                    border-radius: 50%;
                    background: #2b2b2b;
                    font-size: 15px;
                    font-weight: 600;
                }
                .app .badge{
                    right: 1px;
                    bottom: 5px;
                }
                .tray{
                    display: flex;
                    flex: none;
                    align-items: center;
                    margin-left: auto;
                }
                .tray button{
                    width: 30px;
                    height: 50px;
                }
                .tray .meter{
                    width: 62px;
                    height: 25px;
                    margin-right: 2px;
                    border: 3px solid #fff;
                    background: #189c4b;
                    font-size: 17px;
                    line-height: 19px;
                }
                .meter::after{
                    content: '';
                    position: absolute;
                    left: 100%;
                    width: 2px;
                    height: 11px;
                    margin-left: 3px;
                    background: #fff;
                }
                .tray .plug{
                    width: 25px;
                }
                .tray .clock{
                    width: 83px;
                    flex-direction: column;
                    font-size: 14px;
                    line-height: 23px;
                }
                .tray .notes{
                    width: 61px;
                    margin-right: 5px;
                    padding-right: 8px;
                    border-right: 1px solid #777;
                }
                .notes .badge{
                    right: 15px;
                    bottom: 5px;
                }
            </style>
            <button class="start" aria-label="Start"><glob-icon name="windows"></glob-icon></button>
            <div class="search">
                <glob-icon name="search" size="24"></glob-icon>
                <input type="text" placeholder="Type here to search" aria-label="Search">
            </div>
            <button class="view" aria-label="Task view"><glob-icon name="taskview" size="23"></glob-icon></button>
            <hr>
            ${apps.map(([icon, state = '']) => `
                <button class="app ${state}" aria-label="${icon}">
                    <glob-icon name="${icon}" size="28"></glob-icon>
                    ${icon === 'phone' ? '<span class="badge">2</span>' : ''}
                </button>
            `).join('')}
            <div class="tray">
                <button class="meter">98%</button>
                <button class="plug" aria-label="Plugged in"><glob-icon name="plug"></glob-icon></button>
                ${tray.map(icon => `<button aria-label="${icon}"><glob-icon name="${icon}"></glob-icon></button>`).join('')}
                <button class="clock"><span>12:17 PM</span><span>2/14/2021</span></button>
                <button class="notes" aria-label="Notifications"><glob-icon name="note"></glob-icon><span class="badge">4</span></button>
            </div>
        `
    }
}

customElements.define('glob-icon', GlobIcon)
customElements.define('browser-tabs', BrowserTabs)
customElements.define('browser-toolbar', BrowserToolbar)
customElements.define('browser-bookmarks', BrowserBookmarks)
customElements.define('glob-app', GlobApp)
customElements.define('glob-field', GlobField)
customElements.define('task-bar', TaskBar)
</script>
</body>
</html>
